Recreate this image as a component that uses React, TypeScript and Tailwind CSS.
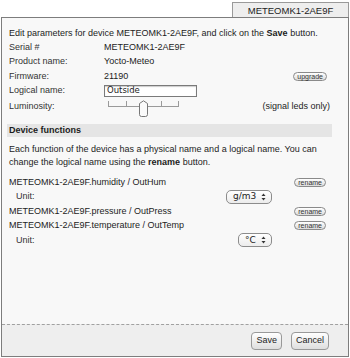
import React from "react";

const FONT = "font-['Liberation_Sans',Arial,sans-serif]";

function Pill({ label }: { label: string }) {
  return (
    <span className="inline-flex h-[9px] items-center rounded-full border border-[#8a8a8a] bg-gradient-to-b from-white to-[#dcdcdc] px-[3px] text-[7px] leading-none text-[#333]">
      {label}
    </span>
  );
}

function UnitSelect({ value, width }: { value: string; width: string }) {
  return (
    <span
      className={`inline-flex h-[14px] items-center justify-between rounded-[5px] border border-[#8c8c8c] bg-gradient-to-b from-white to-[#ececec] pl-[6px] pr-[5px] leading-none text-[#222] ${width}`}
    >
      <span className="font-['DejaVu_Sans',sans-serif] text-[9px]">{value}</span>
      <svg width="5" height="8" viewBox="0 0 5 8">
        <path d="M2.5 0.5 L4.5 3 L0.5 3 Z" fill="#333" />
        <path d="M2.5 7.5 L4.5 5 L0.5 5 Z" fill="#333" />
      </svg>
    </span>
  );
}

function Slider() {
  const ticks = [0, 18, 35, 53, 70];
  return (
    <svg width="76" height="17" viewBox="0 0 76 17" className="block">
      <line x1="2" y1="6.5" x2="72" y2="6.5" stroke="#9a9a9a" strokeWidth="1" />
      {ticks.map((t) => (
        <line key={t} x1={2.5 + t} y1="1" x2={2.5 + t} y2="7" stroke="#9a9a9a" strokeWidth="1" />
      ))}
      <path
        d="M33.5 3.5 L37.5 0.8 L41.5 3.5 L41.5 14.5 Q41.5 16.5 39.5 16.5 L35.5 16.5 Q33.5 16.5 33.5 14.5 Z"
        fill="#fafafa"
        stroke="#777"
        strokeWidth="1"
      />
    </svg>
  );
}

function Field({ label, children, right }: { label: string; children: React.ReactNode; right?: React.ReactNode }) {
  return (
    <div className="flex h-[14.5px] items-center">
      <span className="w-[95px] shrink-0 text-[#333]">{label}</span>
      <div className="flex-1">{children}</div>
      {right}
    </div>
  );
}

function FunctionRow({ name }: { name: string }) {
  return (
    <div className="flex h-[14.5px] items-center justify-between">
      <span>{name}</span>
      <span className="mr-[4px]">
        <Pill label="rename" />
      </span>
    </div>
  );
}

function UnitRow({ value, width }: { value: string; width: string }) {
  return (
    <div className="flex h-[14.5px] items-center justify-between pl-[7px]">
      <span className="text-[#333]">Unit:</span>
      <span className="mr-[58px]">
        <UnitSelect value={value} width={width} />
      </span>
    </div>
  );
}

export default function App() {
  return (
    <div className={`h-[358px] w-[350px] overflow-hidden bg-white text-[9px] leading-[13px] text-[#1c1c1c] ${FONT}`}>
      {/* tab */}
      <div className="ml-[232px] mt-[2px] flex h-[15px] w-[117px] items-center justify-center border border-b-0 border-[#9a9a9a] bg-[#eeeeee] text-[9.5px]">
        METEOMK1-2AE9F
      </div>

      {/* panel */}
      <div className="mx-[1px] flex h-[340px] flex-col border border-[#7d7d7d] bg-[#f8f8f8]">
        <div className="flex-1 pl-[5px] pr-[16px] pt-[9px]">
          <div className="px-[2px]">
            <p>
              Edit parameters for device METEOMK1-2AE9F, and click on the <b>Save</b> button.
            </p>

            <div>
              <Field label="Serial #">METEOMK1-2AE9F</Field>
              <Field label="Product name:">Yocto-Meteo</Field>
              <Field
                label="Firmware:"
                right={
                  <span className="mr-[3px]">
                    <Pill label="upgrade" />
                  </span>
                }
              >
                21190
              </Field>
              <Field label="Logical name:">
                <span className="flex h-[12px] w-[93px] items-center border border-[#7a7a7a] bg-white pl-[2px] font-['DejaVu_Sans',sans-serif] text-[8.5px] shadow-[inset_0_1px_1px_rgba(0,0,0,0.2)]">
                  Outside
                </span>
              </Field>
              <div className="flex h-[17px] items-center">
                <span className="w-[95px] shrink-0 text-[#333]">Luminosity:</span>
                <div className="mt-[3px] flex-1 pl-[2px]">
                  <Slider />
                </div>
                <span>(signal leds only)</span>
              </div>
            </div>
          </div>

          {/* section header */}
          <div className="mt-[9px] h-[13px] bg-[#e5e5e5] px-[2px] font-bold leading-[13px]">Device functions</div>

          <div className="px-[2px]">
            <p className="mt-[6px] leading-[13px]">
              Each function of the device has a physical name and a logical name. You can change the logical name
              using the <b>rename</b> button.
            </p>

            <div className="mt-[6px]">
              <FunctionRow name="METEOMK1-2AE9F.humidity / OutHum" />
              <UnitRow value="g/m3" width="w-[46px]" />
              <FunctionRow name="METEOMK1-2AE9F.pressure / OutPress" />
              <FunctionRow name="METEOMK1-2AE9F.temperature / OutTemp" />
              <UnitRow value="°C" width="w-[34px]" />
            </div>
          </div>
        </div>

        {/* footer */}
        <div className="flex h-[32px] items-center justify-end gap-[9px] border-t border-dashed border-[#a0a0a0] bg-[#eeeeee] pr-[19px]">
          <button className="h-[18px] rounded-[4px] border border-[#999] bg-gradient-to-b from-white to-[#dedede] px-[4px] text-[9px] leading-none text-[#222]">
            Save
          </button>
          <button className="h-[18px] rounded-[4px] border border-[#999] bg-gradient-to-b from-white to-[#dedede] px-[4px] text-[9px] leading-none text-[#222]">
            Cancel
          </button>
        </div>
      </div>
    </div>
  );
}
